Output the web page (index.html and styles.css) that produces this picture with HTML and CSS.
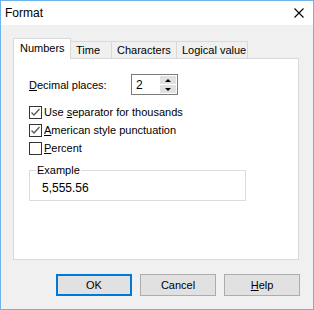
FILE: index.html
```html
<!DOCTYPE html>
<html lang="en">
<head>
    <meta charset="UTF-8">
    <title>Format</title>
    <link rel="stylesheet" href="styles.css">
</head>
<body>

<div class="window">
    <div class="titlebar">
        <span class="title">Format</span>
        <svg class="close" width="10" height="10" viewBox="0 0 10 10">
            <path d="M0.5 0.5L9.5 9.5M9.5 0.5L0.5 9.5" stroke="#000" stroke-width="1.1" fill="none"/>
        </svg>
    </div>

    <div class="client">
        <div class="tabs">
            <div class="tab tab-numbers active">Numbers</div>
            <div class="tab tab-time">Time</div>
            <div class="tab tab-chars">Characters</div>
            <div class="tab tab-logical">Logical value</div>
        </div>

        <div class="panel">
            <div class="field-row">
                <label class="field-label"><u>D</u>ecimal places:</label>
                <div class="spin">
                    <span class="spin-value">2</span>
                    <div class="spin-btns">
                        <span class="spin-btn"><i class="arrow up"></i></span>
                        <span class="spin-btn"><i class="arrow down"></i></span>
                    </div>
                </div>
            </div>

            <div class="check-row">
                <span class="box"><svg width="11" height="11" viewBox="0 0 11 11"><path d="M1.5 5.5L4 8L9.5 2" stroke="#595959" stroke-width="1.3" fill="none"/></svg></span>
                <span>Use <u>s</u>eparator for thousands</span>
            </div>
            <div class="check-row">
                <span class="box"><svg width="11" height="11" viewBox="0 0 11 11"><path d="M1.5 5.5L4 8L9.5 2" stroke="#595959" stroke-width="1.3" fill="none"/></svg></span>
                <span><u>A</u>merican style punctuation</span>
            </div>
            <div class="check-row">
                <span class="box"></span>
                <span><u>P</u>ercent</span>
            </div>

            <fieldset class="group">
                <legend>Example</legend>
                <div class="sample">5,555.56</div>
            </fieldset>
        </div>

        <div class="buttons">
            <div class="btn default">OK</div>
            <div class="btn">Cancel</div>
            <div class="btn"><u>H</u>elp</div>
        </div>
    </div>
</div>

</body>
</html>
```

FILE: styles.css
```css
*{
    margin: 0;
    padding: 0;
    box-sizing: border-box;
}
body{
    font-family: "Liberation Sans", Arial, sans-serif;
    font-size: 11px;
    color: #000;
    background: #fff;
}
u{
    text-decoration: underline;
    text-underline-offset: 1px;
}
.window{
    width: 314px;
    height: 310px;
    border: 1px solid #6fb3ea;
    background: #f0f0f0;
    display: flex;
    flex-direction: column;
}
.titlebar{
    height: 24px;
    background: #fff;
    display: flex;
    align-items: center;
    justify-content: space-between;
    padding: 0 9px 0 4px;
}
.title{
    font-size: 12px;
}
.client{
    padding: 13px 13px 0 12px;
}
.tabs{
    display: flex;
    align-items: flex-end;
    height: 21px;
    margin-bottom: -1px;
    position: relative;
    z-index: 1;
}
.tab{
    height: 17px;
    margin-bottom: 1px;
    padding: 0 0 0 5px;
    border: 1px solid #d9d9d9;
    border-bottom: none;
    margin-left: -1px;
    background: #f0f0f0;
    display: flex;
    align-items: center;
    line-height: 13px;
    white-space: nowrap;
}
.tab-numbers{ width: 58px; }
.tab-time{ width: 42px; }
.tab-chars{ width: 66px; }
.tab-logical{ width: 72px; }
.tab.active{
    height: 21px;
    margin: 0;
    padding: 0 0 2px 6px;
    background: #fff;
    position: relative;
    z-index: 1;
}
.panel{
    height: 202px;
    margin-right: 1px;
    background: #fff;
    border: 1px solid #d9d9d9;
    padding: 15px 15px 0 15px;
}
.field-row{
    display: flex;
    align-items: center;
    height: 21px;
}
.field-label{
    width: 102px;
}
.spin{
    width: 47px;
    height: 21px;
    border: 1px solid #7a7a7a;
    display: flex;
    justify-content: space-between;
    padding: 1px;
}
.spin-value{
    padding: 2px 0 0 3px;
    font-size: 12px;
}
.spin-btns{
    display: flex;
    flex-direction: column;
    gap: 1px;
}
.spin-btn{
    width: 16px;
    height: 8px;
    background: #e1e1e1;
    display: flex;
    align-items: center;
    justify-content: center;
}
.arrow{
    width: 0;
    height: 0;
    border-left: 3px solid transparent;
    border-right: 3px solid transparent;
}
.arrow.up{
    border-bottom: 3px solid #000;
}
.arrow.down{
    border-top: 3px solid #000;
}
.check-row{
    display: flex;
    align-items: center;
    height: 18px;
    gap: 2px;
}
.field-row + .check-row{
    margin-top: 8px;
}
.box{
    width: 13px;
    height: 13px;
    border: 1px solid #333;
    background: #fff;
    display: flex;
}
.group{
    width: 217px;
    margin-top: 7px;
    border: 1px solid #dcdcdc;
    padding: 5px 12px 5px 12px;
}
.group legend{
    margin-left: -6px;
    padding: 0 1px;
    line-height: 13px;
}
.sample{
    line-height: 13px;
    font-size: 12px;
}
.buttons{
    display: flex;
    justify-content: flex-end;
    gap: 8px;
    margin-top: 14px;
}
.btn{
    width: 76px;
    height: 22px;
    background: #e1e1e1;
    border: 1px solid #adadad;
    display: flex;
    align-items: center;
    justify-content: center;
}
.btn.default{
    border: 2px solid #0078d7;
}
```
